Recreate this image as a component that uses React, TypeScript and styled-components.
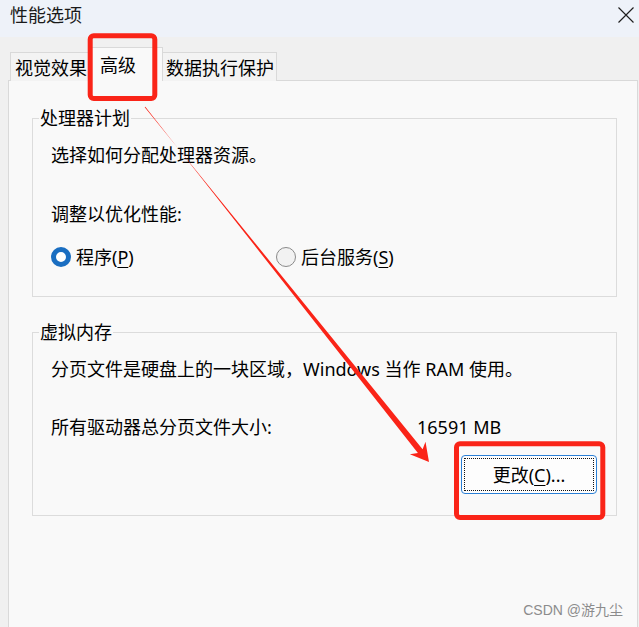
import React from "react";
import styled, { createGlobalStyle } from "styled-components";

const Global = createGlobalStyle`
  html, body { margin: 0; padding: 0; }
  body {
    width: 639px;
    height: 627px;
    overflow: hidden;
    background: #f0f0f0;
    font-family: "Noto Sans", "Noto Sans CJK SC", sans-serif;
    color: #000;
  }
  #root { height: 100%; }
`;

const Window = styled.div`
  position: relative;
  width: 639px;
  height: 627px;
  display: flex;
  flex-direction: column;
  background: #f0f0f0;
  overflow: hidden;
`;

const TitleBar = styled.div`
  flex: none;
  height: 37px;
  box-sizing: border-box;
  display: flex;
  align-items: flex-start;
  justify-content: space-between;
  padding: 3px 5px 0 10px;
  background: #eef2f9;
`;

const Title = styled.span`
  font-size: 18px;
  line-height: 24px;
  color: #1a1a1a;
`;

const CloseIcon = styled.svg`
  margin-top: 4px;
  width: 16px;
  height: 16px;
`;

const Body = styled.div`
  flex: 1;
  display: flex;
  flex-direction: column;
  padding: 10px 1px 0 8px;
`;

const TabStrip = styled.div`
  flex: none;
  height: 34px;
  display: flex;
  align-items: flex-end;
  padding-left: 2px;
`;

const Tab = styled.div<{ $active?: boolean }>`
  position: relative;
  box-sizing: border-box;
  border: 1px solid #d9d9d9;
  border-bottom: none;
  font-size: 18px;
  line-height: 26px;
  white-space: nowrap;
  color: #000;
  ${(p) =>
    p.$active
      ? `
    z-index: 1;
    height: 34px;
    margin: 0 -2px;
    padding: 4px 26px 0 11px;
    background: #f9f9f9;
  `
      : `
    height: 29px;
    padding: 2px 2px 0 4px;
    background: #f3f3f3;
  `}
`;

const Panel = styled.div`
  flex: 1;
  margin-top: -1px;
  display: flex;
  flex-direction: column;
  gap: 23px;
  border: 1px solid #d9d9d9;
  border-bottom: none;
  background: #f9f9f9;
  padding: 25px 20px 0 23px;
`;

const Group = styled.fieldset<{ $bottom: number }>`
  margin: 0;
  min-width: 0;
  border: 1px solid #dcdcdc;
  padding: 13px 19px ${(p) => p.$bottom}px 18px;
  display: flex;
  flex-direction: column;
`;

const Legend = styled.legend`
  margin-left: -12px;
  padding: 0 1px;
  font-size: 18px;
  line-height: 24px;
  color: #000;
`;

const Line = styled.div<{ $gap?: number }>`
  margin-top: ${(p) => p.$gap ?? 0}px;
  font-size: 18px;
  line-height: 24px;
  white-space: nowrap;
  color: #000;
`;

const RadioRow = styled.div`
  margin-top: 19px;
  display: grid;
  grid-template-columns: 225px auto;
`;

const RadioItem = styled.label`
  display: flex;
  align-items: center;
  gap: 5px;
  font-size: 18px;
  line-height: 24px;
  white-space: nowrap;
`;

const RadioDot = styled.span<{ $checked?: boolean }>`
  box-sizing: border-box;
  width: 20px;
  height: 20px;
  border-radius: 50%;
  flex: none;
  ${(p) =>
    p.$checked
      ? `border: 5px solid #1a6ec1; background: #ffffff;`
      : `border: 1px solid #8a8a8a; background: #f2f2f2;`}
`;

const Key = styled.span`
  text-decoration: underline;
  text-underline-offset: 3px;
  text-decoration-thickness: 1px;
`;

const SizeRow = styled.div`
  margin-top: 34px;
  display: grid;
  grid-template-columns: 366px auto;
  font-size: 18px;
  line-height: 24px;
  white-space: nowrap;
`;

const ButtonRow = styled.div`
  margin-top: 16px;
  display: flex;
  justify-content: flex-end;
`;

const Button = styled.button`
  position: relative;
  width: 136px;
  height: 39px;
  box-sizing: border-box;
  border: 1px solid #2a7fd6;
  border-radius: 4px;
  background: #fdfdfd;
  font-family: inherit;
  font-size: 18px;
  line-height: 24px;
  color: #000;
  padding: 0;
  &::after {
    content: "";
    position: absolute;
    inset: 2px;
    border: 1px dotted #111;
  }
`;

const Annotations = styled.svg`
  position: absolute;
  left: 0;
  top: 0;
  width: 639px;
  height: 627px;
  pointer-events: none;
  z-index: 5;
`;

const Watermark = styled.div`
  position: absolute;
  right: 16px;
  bottom: 9px;
  font-family: "Liberation Sans", "Noto Sans CJK SC", sans-serif;
  font-size: 14px;
  line-height: 16px;
  color: #8c8c8c;
  z-index: 6;
`;

export default function App() {
  return (
    <Window>
      <Global />
      <TitleBar>
        <Title>性能选项</Title>
        <CloseIcon viewBox="0 0 16 16">
          <path d="M0.5 0.5 L15.5 15.5 M15.5 0.5 L0.5 15.5" stroke="#1f1f1f" strokeWidth="1.15" fill="none" />
        </CloseIcon>
      </TitleBar>
      <Body>
        <TabStrip>
          <Tab>视觉效果</Tab>
          <Tab $active>高级</Tab>
          <Tab>数据执行保护</Tab>
        </TabStrip>
        <Panel>
          <Group $bottom={27}>
            <Legend>处理器计划</Legend>
            <Line>选择如何分配处理器资源。</Line>
            <Line $gap={35}>调整以优化性能:</Line>
            <RadioRow>
              <RadioItem>
                <RadioDot $checked />
                <span>
                  程序(<Key>P</Key>)
                </span>
              </RadioItem>
              <RadioItem>
                <RadioDot />
                <span>
                  后台服务(<Key>S</Key>)
                </span>
              </RadioItem>
            </RadioRow>
          </Group>
          <Group $bottom={21}>
            <Legend>虚拟内存</Legend>
            <Line>分页文件是硬盘上的一块区域，Windows 当作 RAM 使用。</Line>
            <SizeRow>
              <span>所有驱动器总分页文件大小:</span>
              <span>16591 MB</span>
            </SizeRow>
            <ButtonRow>
              <Button>
                更改(<Key>C</Key>)...
              </Button>
            </ButtonRow>
          </Group>
        </Panel>
      </Body>
      <Annotations viewBox="0 0 639 627">
        <rect x="90.2" y="35.8" width="64.6" height="62.7" rx="3.5" fill="none" stroke="#fa2418" strokeWidth="5" />
        <rect x="456.5" y="443.8" width="146.3" height="73.7" rx="3.5" fill="none" stroke="#fa2418" strokeWidth="5" />
        <polygon
          points="144.7,107.3 422.6,449.2 425.5,441.7 429,462 409.9,454.2 417.9,453.0 145.3,106.7"
          fill="#fa2418"
        />
      </Annotations>
      <Watermark>CSDN @游九尘</Watermark>
    </Window>
  );
}
